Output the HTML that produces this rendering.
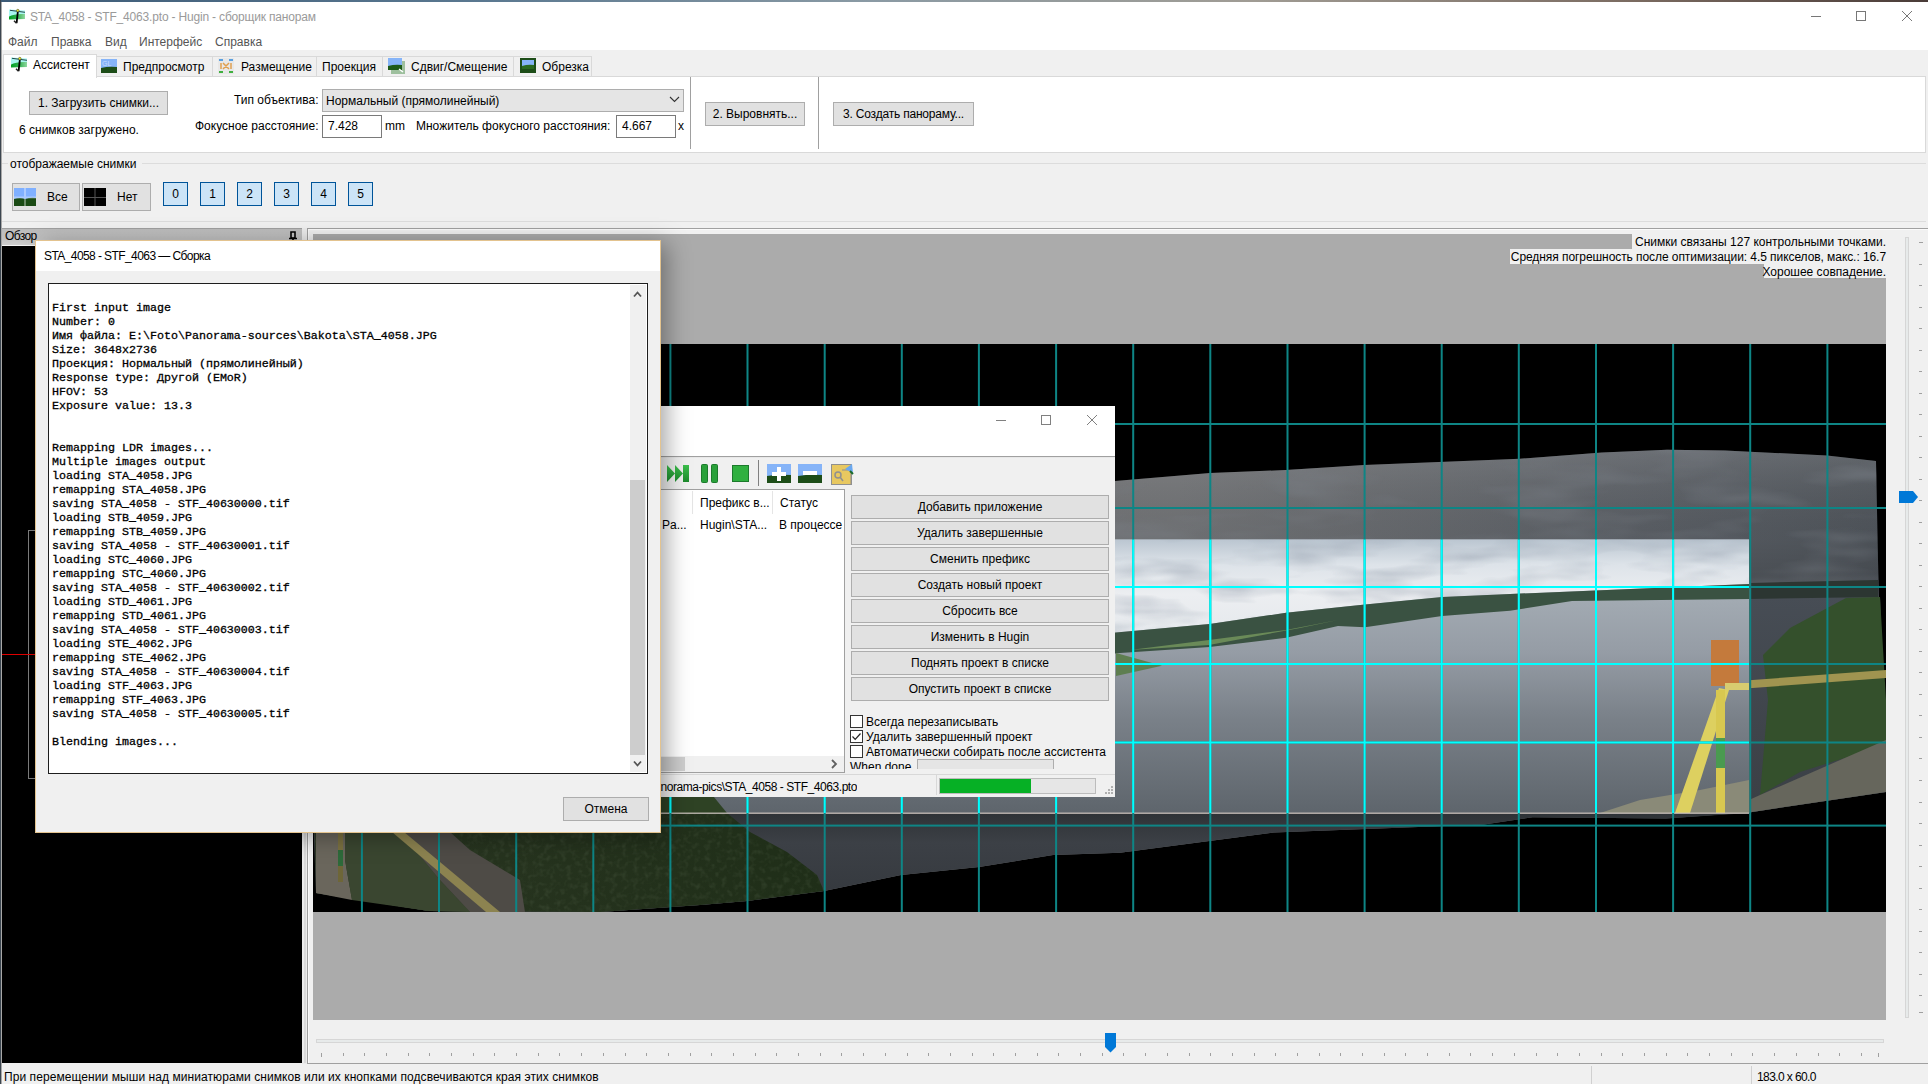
<!DOCTYPE html>
<html><head><meta charset="utf-8">
<style>
*{box-sizing:border-box;margin:0;padding:0}
html,body{width:1928px;height:1084px;overflow:hidden;background:#f0f0f0;font-family:"Liberation Sans",sans-serif;font-size:12px;color:#000}
.a{position:absolute}
.t{position:absolute;white-space:nowrap;font-size:12px;line-height:14px}
.btn{position:absolute;background:#e1e1e1;border:1px solid #adadad}
.btn span{position:absolute;left:0;right:0;text-align:center;white-space:nowrap;line-height:14px}
.inp{position:absolute;background:#fff;border:1px solid #7a7a7a}
.mono{position:absolute;white-space:pre;font-family:"Liberation Mono",monospace;font-size:11.67px;line-height:14px;color:#000;-webkit-text-stroke:0.3px #000}
</style></head>
<body>
<!-- window chrome -->
<div class="a" style="left:0;top:0;width:1928px;height:2px;background:linear-gradient(90deg,#3c5a76 0%,#5a7890 25%,#8a9aa4 45%,#a09c94 65%,#7a6a60 85%,#4a3c38 100%)"></div>
<div class="a" style="left:0;top:2px;width:1928px;height:48px;background:#fff"></div>
<div class="a" style="left:0;top:0;width:1px;height:1084px;background:#3c4650"></div>
<div class="a" style="left:1px;top:2px;width:1px;height:1082px;background:#a8a8a8"></div>

<!-- title -->
<svg class="a" style="left:8px;top:8px" width="18" height="16" viewBox="0 0 18 16">
  <defs><linearGradient id="hg8" x1="0" x2="1" y1="0" y2="0"><stop offset="0" stop-color="#00a020"/><stop offset=".5" stop-color="#30b050"/><stop offset="1" stop-color="#90d8a0"/></linearGradient></defs>
  <path d="M1 1.5 L17 2.5 L17 8 L1 8Z" fill="#a8f6f0"/>
  <path d="M1 8.5 Q6 5.5 17 6 L17 10.9 Q8 11 1 11.6Z" fill="url(#hg8)"/>
  <path d="M2 2.3 L17 4.3" stroke="#24484a" stroke-width="1"/>
  <path d="M9.8 4 L8.6 15.2" stroke="#000" stroke-width="1.8"/>
  <path d="M6 12.8 L8.5 15.2" stroke="#222" stroke-width="1.4"/>
  <circle cx="9.8" cy="2.6" r="1.3" fill="#f2f020" stroke="#333" stroke-width=".5"/>
</svg>
<div class="t" style="left:30px;top:10px;color:#9a9a9a;letter-spacing:-0.18px">STA_4058 - STF_4063.pto - Hugin - сборщик панорам</div>
<!-- caption buttons -->
<div class="a" style="left:1811px;top:16px;width:10px;height:1px;background:#777"></div>
<div class="a" style="left:1856px;top:11px;width:10px;height:10px;border:1px solid #777"></div>
<svg class="a" style="left:1901px;top:10px" width="12" height="12" viewBox="0 0 12 12"><path d="M1 1 L11 11 M11 1 L1 11" stroke="#777" stroke-width="1"/></svg>

<!-- menu -->
<div class="t" style="left:8px;top:35px;color:#555">Файл</div>
<div class="t" style="left:51px;top:35px;color:#555">Правка</div>
<div class="t" style="left:105px;top:35px;color:#555">Вид</div>
<div class="t" style="left:139px;top:35px;color:#555">Интерфейс</div>
<div class="t" style="left:215px;top:35px;color:#555">Справка</div>


<!-- tabs -->
<div class="a" style="left:3px;top:76px;width:1923px;height:77px;background:#fff;border:1px solid #d9d9d9"></div>
<div class="a" style="left:96px;top:56px;width:117px;height:21px;background:#f0f0f0;border:1px solid #d9d9d9"></div>
<div class="a" style="left:212px;top:56px;width:105px;height:21px;background:#f0f0f0;border:1px solid #d9d9d9"></div>
<div class="a" style="left:316px;top:56px;width:67px;height:21px;background:#f0f0f0;border:1px solid #d9d9d9"></div>
<div class="a" style="left:382px;top:56px;width:132px;height:21px;background:#f0f0f0;border:1px solid #d9d9d9"></div>
<div class="a" style="left:513px;top:56px;width:79px;height:21px;background:#f0f0f0;border:1px solid #d9d9d9"></div>
<div class="a" style="left:3px;top:54px;width:94px;height:24px;background:#fff;border:1px solid #d9d9d9;border-bottom:none"></div>
<svg class="a" style="left:10px;top:56px" width="18" height="16" viewBox="0 0 18 16">
  <defs><linearGradient id="hg10" x1="0" x2="1" y1="0" y2="0"><stop offset="0" stop-color="#00a020"/><stop offset=".5" stop-color="#30b050"/><stop offset="1" stop-color="#90d8a0"/></linearGradient></defs>
  <path d="M1 1.5 L17 2.5 L17 8 L1 8Z" fill="#a8f6f0"/>
  <path d="M1 8.5 Q6 5.5 17 6 L17 10.9 Q8 11 1 11.6Z" fill="url(#hg10)"/>
  <path d="M2 2.3 L17 4.3" stroke="#24484a" stroke-width="1"/>
  <path d="M9.8 4 L8.6 15.2" stroke="#000" stroke-width="1.8"/>
  <path d="M6 12.8 L8.5 15.2" stroke="#222" stroke-width="1.4"/>
  <circle cx="9.8" cy="2.6" r="1.3" fill="#f2f020" stroke="#333" stroke-width=".5"/>
</svg>
<div class="t" style="left:33px;top:58px">Ассистент</div>
<svg class="a" style="left:101px;top:59px" width="16" height="14" viewBox="0 0 16 14">
  <rect width="16" height="14" fill="#86b4f8"/><path d="M0 9 Q8 7 16 8 L16 14 L0 14Z" fill="#1d4d18"/>
  <text x="1" y="7" font-size="7" fill="#c8dcff" font-family="Liberation Sans">GL</text>
</svg>
<div class="t" style="left:123px;top:60px">Предпросмотр</div>
<svg class="a" style="left:218px;top:58px" width="16" height="16" viewBox="0 0 16 16">
  <rect x="0" y="0" width="16" height="16" fill="#e8e8e8"/>
  <path d="M1 2h4M11 2h4" stroke="#5aa0e0" stroke-width="2"/><path d="M1 14h4M11 14h4" stroke="#40b040" stroke-width="2"/>
  <path d="M3 5v6M13 5v6M5 5l6 6M11 5l-6 6" stroke="#e0a050" stroke-width="1.5"/>
</svg>
<div class="t" style="left:241px;top:60px">Размещение</div>
<div class="t" style="left:322px;top:60px">Проекция</div>
<svg class="a" style="left:388px;top:58px" width="17" height="16" viewBox="0 0 17 16">
  <rect x="3" y="3" width="14" height="13" fill="#9ec09e"/><rect x="0" y="0" width="14" height="12" fill="#86b4f8"/>
  <path d="M0 8 Q7 6 14 7 L14 12 L0 12Z" fill="#1d5a18"/><path d="M11 11 l4 3" stroke="#fff" stroke-width="1.5"/>
</svg>
<div class="t" style="left:411px;top:60px">Сдвиг/Смещение</div>
<svg class="a" style="left:520px;top:58px" width="16" height="15" viewBox="0 0 16 15">
  <rect width="16" height="15" fill="#1d4d18"/><rect x="2" y="2" width="12" height="8" fill="#86b4f8"/><path d="M2 8 Q8 6 14 7 L14 11 L2 11Z" fill="#2a6a20"/>
</svg>
<div class="t" style="left:542px;top:60px">Обрезка</div>

<!-- assistant panel -->
<div class="btn" style="left:29px;top:91px;width:139px;height:24px"><span style="top:4px">1. Загрузить снимки...</span></div>
<div class="t" style="left:19px;top:123px">6 снимков загружено.</div>
<div class="t" style="left:234px;top:93px">Тип объектива:</div>
<div class="a" style="left:322px;top:89px;width:362px;height:23px;background:#e5e5e5;border:1px solid #adadad"></div>
<div class="t" style="left:326px;top:94px">Нормальный (прямолинейный)</div>
<svg class="a" style="left:669px;top:96px" width="11" height="7" viewBox="0 0 11 7"><path d="M1 1 L5.5 5.5 L10 1" fill="none" stroke="#333" stroke-width="1.1"/></svg>
<div class="t" style="left:195px;top:119px">Фокусное расстояние:</div>
<div class="inp" style="left:322px;top:115px;width:60px;height:23px"></div>
<div class="t" style="left:328px;top:119px">7.428</div>
<div class="t" style="left:385px;top:119px">mm</div>
<div class="t" style="left:416px;top:119px">Множитель фокусного расстояния:</div>
<div class="inp" style="left:616px;top:115px;width:60px;height:23px"></div>
<div class="t" style="left:622px;top:119px">4.667</div>
<div class="t" style="left:678px;top:119px">x</div>
<div class="a" style="left:690px;top:77px;width:1px;height:72px;background:#a0a0a0"></div>
<div class="btn" style="left:705px;top:102px;width:100px;height:24px"><span style="top:4px">2. Выровнять...</span></div>
<div class="a" style="left:818px;top:77px;width:1px;height:72px;background:#a0a0a0"></div>
<div class="btn" style="left:833px;top:102px;width:141px;height:24px"><span style="top:4px;letter-spacing:-0.2px">3. Создать панораму...</span></div>

<!-- group -->
<div class="a" style="left:2px;top:163px;width:1924px;height:1px;background:#dcdcdc"></div>
<div class="a" style="left:8px;top:156px;width:134px;height:14px;background:#f0f0f0"></div>
<div class="t" style="left:10px;top:157px">отображаемые снимки</div>
<div class="btn" style="left:12px;top:183px;width:68px;height:28px"></div>
<svg class="a" style="left:14px;top:188px" width="22" height="18" viewBox="0 0 22 18">
  <rect width="22" height="18" fill="#80b0ff"/><path d="M0 11 Q6 9 11 11 Q17 9 22 10 L22 18 L0 18Z" fill="#1a4a14"/>
  <path d="M11 0v18M0 9.5h22" stroke="#fff" stroke-opacity=".35" stroke-width="2"/>
</svg>
<div class="t" style="left:47px;top:190px">Все</div>
<div class="btn" style="left:82px;top:183px;width:69px;height:28px"></div>
<svg class="a" style="left:84px;top:188px" width="22" height="18" viewBox="0 0 22 18">
  <rect width="22" height="18" fill="#000"/><path d="M11 0v18M0 9.5h22" stroke="#555" stroke-width="1"/>
</svg>
<div class="t" style="left:117px;top:190px">Нет</div>
<div class="a" style="left:163px;top:182px;width:25px;height:24px;background:#cce4f7;border:1px solid #005499"></div><div class="t" style="left:163px;width:25px;text-align:center;top:187px">0</div>
<div class="a" style="left:200px;top:182px;width:25px;height:24px;background:#cce4f7;border:1px solid #005499"></div><div class="t" style="left:200px;width:25px;text-align:center;top:187px">1</div>
<div class="a" style="left:237px;top:182px;width:25px;height:24px;background:#cce4f7;border:1px solid #005499"></div><div class="t" style="left:237px;width:25px;text-align:center;top:187px">2</div>
<div class="a" style="left:274px;top:182px;width:25px;height:24px;background:#cce4f7;border:1px solid #005499"></div><div class="t" style="left:274px;width:25px;text-align:center;top:187px">3</div>
<div class="a" style="left:311px;top:182px;width:25px;height:24px;background:#cce4f7;border:1px solid #005499"></div><div class="t" style="left:311px;width:25px;text-align:center;top:187px">4</div>
<div class="a" style="left:348px;top:182px;width:25px;height:24px;background:#cce4f7;border:1px solid #005499"></div><div class="t" style="left:348px;width:25px;text-align:center;top:187px">5</div>
<div class="a" style="left:2px;top:221px;width:1924px;height:1px;background:#dcdcdc"></div>

<!-- dock Обзор -->
<div class="a" style="left:2px;top:228px;width:301px;height:18px;background:linear-gradient(#bdbdbd,#c2c2c2 60%,#cfcfcf);border-top:1px solid #a0a0a0;border-bottom:1px solid #f4f4f4"></div>
<div class="t" style="left:5px;top:229px;letter-spacing:-0.6px">Обзор</div>
<svg class="a" style="left:288px;top:231px" width="10" height="11" viewBox="0 0 10 11"><path d="M3 1h4v6h-4z" fill="none" stroke="#000" stroke-width="1.6"/><path d="M1 7.5h8M5 8v3" stroke="#000" stroke-width="1.6"/></svg>
<div class="a" style="left:2px;top:246px;width:300px;height:817px;background:#000"></div>
<div class="a" style="left:28px;top:530px;width:40px;height:249px;border:1px solid #808080;border-right:none"></div>
<div class="a" style="left:2px;top:654px;width:40px;height:1px;background:#e00000"></div>
<!-- splitter -->
<div class="a" style="left:302px;top:228px;width:5px;height:836px;background:#ececec"></div>
<div class="a" style="left:304px;top:246px;width:2px;height:817px;background:#dadada"></div>

<!-- preview panel -->
<div class="a" style="left:307px;top:228px;width:1621px;height:836px;border-left:1px solid #a0a0a0;border-top:1px solid #a0a0a0;border-bottom:1px solid #a0a0a0;background:#f0f0f0"></div>
<div class="a" style="left:308px;top:229px;width:1620px;height:1px;background:#fafafa"></div>
<div class="a" style="left:308px;top:229px;width:1px;height:834px;background:#fafafa"></div>
<svg class="a" style="left:313px;top:234px" width="1573" height="786" viewBox="313 234 1573 786">
  <defs>
    <linearGradient id="skyd" x1="0" y1="0" x2="1" y2="0"><stop offset="0" stop-color="#808183"/><stop offset=".55" stop-color="#7c7e81"/><stop offset=".85" stop-color="#62676e"/><stop offset="1" stop-color="#565c63"/></linearGradient>
    <linearGradient id="skyb" gradientUnits="userSpaceOnUse" x1="0" x2="0" y1="539" y2="640"><stop offset="0" stop-color="#bac5d0"/><stop offset=".25" stop-color="#dde3e9"/><stop offset=".55" stop-color="#eceef1"/><stop offset="1" stop-color="#e4e8ec"/></linearGradient>
    <linearGradient id="watb" gradientUnits="userSpaceOnUse" x1="0" x2="0" y1="600" y2="813"><stop offset="0" stop-color="#a2aab2"/><stop offset=".25" stop-color="#959ca5"/><stop offset=".55" stop-color="#7a8189"/><stop offset="1" stop-color="#5e656c"/></linearGradient>
    <linearGradient id="watd" x1="0" y1="0" x2="0" y2="1"><stop offset="0" stop-color="#474d55"/><stop offset="1" stop-color="#3a3f45"/></linearGradient>
    <linearGradient id="skyv" gradientUnits="userSpaceOnUse" x1="0" x2="0" y1="450" y2="600"><stop offset="0" stop-color="#888" stop-opacity=".25"/><stop offset=".6" stop-color="#000" stop-opacity=".12"/><stop offset="1" stop-color="#000" stop-opacity=".25"/></linearGradient>
    <linearGradient id="band" x1="0" y1="0" x2="0" y2="1"><stop offset="0" stop-color="#2e3236"/><stop offset=".3" stop-color="#3c4046"/><stop offset="1" stop-color="#33373c"/></linearGradient>
    <linearGradient id="hill" x1="0" y1="0" x2="1" y2="0"><stop offset="0" stop-color="#2a3622"/><stop offset="1" stop-color="#1f2e18"/></linearGradient>
    <filter id="cloud" x="0" y="0" width="100%" height="100%"><feTurbulence type="fractalNoise" baseFrequency="0.012 0.05" numOctaves="3" seed="7"/><feColorMatrix values="0 0 0 0 0.35  0 0 0 0 0.4  0 0 0 0 0.47  0 0 0 -2.2 1.25"/></filter>
    <filter id="cloud2" x="0" y="0" width="100%" height="100%"><feTurbulence type="fractalNoise" baseFrequency="0.008 0.035" numOctaves="3" seed="3"/><feColorMatrix values="0 0 0 0 0.2  0 0 0 0 0.22  0 0 0 0 0.25  0 0 0 -2.5 1.3"/></filter>
    <filter id="foli" x="0" y="0" width="100%" height="100%"><feTurbulence type="fractalNoise" baseFrequency="0.18" numOctaves="2" seed="11"/><feColorMatrix values="0 0 0 0 0.3  0 0 0 0 0.38  0 0 0 0 0.25  0 0 0 -2 1.1"/></filter>
    <filter id="ripple" x="0" y="0" width="100%" height="100%"><feTurbulence type="fractalNoise" baseFrequency="0.006 0.09" numOctaves="2" seed="5"/><feColorMatrix values="0 0 0 0 0.85  0 0 0 0 0.88  0 0 0 0 0.92  0 0 0 -2.5 1.2"/></filter>
    <clipPath id="hillclip"><path d="M313 760 L700 760 L727 813 L750 832 L787 852 L817 875 L824 891 L747 901 L700 905 L600 912 L429 911 L316 893 Z"/></clipPath>
    <clipPath id="cliffclip"><path d="M1846 598 L1880 597 L1886 700 L1886 745 L1800 772 L1760 795 L1763 760 L1768 700 L1763 655 L1790 628 Z"/></clipPath>
    <clipPath id="skyclip"><path d="M660 539.5 L1749 539.5 L1749 584 L1510 594 L1442 597 L1365 604.5 L1286 612.8 L1209.6 624 L1116 632.5 L660 680 Z"/></clipPath>
    <clipPath id="dimclip"><path d="M316 500 L700 492 L1115 481 L1210 473 L1286 470 L1364 465 L1520 458.7 L1602 452.5 L1667 449.7 L1725 450.5 L1827 455.4 L1876 461 L1878 560 L1880 640 L1886 760 L1886.6 792 L1749 812.4 L1666 818.4 L1532.6 817.2 L1484 824.5 L1273.7 832.6 L1120 852.8 L1053 855 L979 867 L901 875 L824 891 L747 901 L700 905 L600 912 L429 911 L316 893 Z"/></clipPath>
  </defs>
  <rect x="313" y="234" width="1573" height="786" fill="#ababab"/>
  <rect x="313" y="344" width="1573" height="568" fill="#000"/>
  <path d="M316 500 L700 492 L1115 481 L1210 473 L1286 470 L1364 465 L1520 458.7 L1602 452.5 L1667 449.7 L1725 450.5 L1827 455.4 L1876 461 L1878 560 L1880 640 L1886 760 L1886.6 792 L1749 812.4 L1666 818.4 L1532.6 817.2 L1484 824.5 L1273.7 832.6 L1120 852.8 L1053 855 L979 867 L901 875 L824 891 L747 901 L700 905 L600 912 L429 911 L316 893 Z" fill="url(#skyd)"/>
  <path d="M316 500 L700 492 L1115 481 L1210 473 L1286 470 L1364 465 L1520 458.7 L1602 452.5 L1667 449.7 L1725 450.5 L1827 455.4 L1876 461 L1878 560 L1880 640 L1886 760 L1886.6 792 L1749 812.4 L1666 818.4 L1532.6 817.2 L1484 824.5 L1273.7 832.6 L1120 852.8 L1053 855 L979 867 L901 875 L824 891 L747 901 L700 905 L600 912 L429 911 L316 893 Z" fill="url(#skyv)"/>
  <g clip-path="url(#dimclip)"><rect x="313" y="440" width="1573" height="160" filter="url(#cloud2)" opacity=".5"/></g>
  <path d="M313 813 L1749 813 L1666 818.4 L1532.6 817.2 L1484 824.5 L1273.7 832.6 L1120 852.8 L1053 855 L979 867 L901 875 L824 891 L747 901 L700 905 L600 912 L429 911 L316 893 Z" fill="url(#band)"/>
  <!-- right dim part -->
  <path d="M1749 583 L1878 580 L1878 598 L1749 600 Z" fill="#2c3632"/>
  <path d="M1749 599 L1880 597 L1886 760 L1886.6 792 L1749 812.4 Z" fill="url(#watd)"/>
  <path d="M1846 598 L1880 597 L1886 700 L1886 745 L1800 772 L1760 795 L1763 760 L1768 700 L1763 655 L1790 628 Z" fill="#34502c"/>
  <path d="M1760 795 L1886 740 L1886.6 792 L1749 812.4 L1749 800 Z" fill="#66665c"/>
  <path d="M1725 682 L1886 670 L1886 678 L1725 690 Z" fill="#a09450"/>
  <!-- lower-left hill (dim) -->
  <path d="M313 760 L700 760 L727 813 L750 832 L787 852 L817 875 L824 891 L747 901 L700 905 L600 912 L429 911 L316 893 Z" fill="url(#hill)"/>
  <g clip-path="url(#hillclip)"><rect x="313" y="760" width="520" height="155" filter="url(#foli)" opacity=".15"/></g>
  <path d="M316 832 L350 832 L345 860 L352 900 L316 893 Z" fill="#6a665c"/>
  <path d="M345 832 L400 832 L440 880 L470 912 L429 911 L352 900 L345 860 Z" fill="#3a4630"/>
  <path d="M400 832 L450 832 L470 850 L520 880 L525 912 L470 912 L440 880 Z" fill="#4e4b46"/>
  <path d="M392 832 L404 832 L500 912 L486 912 Z" fill="#8c8350"/>
  <rect x="338" y="832" width="5" height="18" fill="#7a7040"/><rect x="338" y="850" width="5" height="16" fill="#2e6a3a"/><rect x="338" y="866" width="5" height="16" fill="#6e6638"/>
  <!-- highlighted image -->
  <rect x="660" y="539.5" width="1089" height="273.5" fill="url(#watb)"/>
  <path d="M660 539.5 L1749 539.5 L1749 584 L1510 594 L1442 597 L1365 604.5 L1286 612.8 L1209.6 624 L1116 632.5 L660 680 Z" fill="url(#skyb)"/>
  <g clip-path="url(#skyclip)"><rect x="660" y="539" width="1090" height="145" filter="url(#cloud)" opacity=".55"/></g>
  <path d="M660 680 L1116 632.5 L1209.6 624 L1286 612.8 L1365 604.5 L1442 597 L1510 594 L1749 584 L1749 599 L1572 601 L1510 610.7 L1442 616 L1365 627.3 L1338 626 L1286 637.7 L1209.6 647 L1120 653 L660 700 Z" fill="#3a5242"/>
  <path d="M1130 650 L1209 640 L1286 630 L1338 620 L1300 628 L1209 645 Z" fill="#6a8a58"/>
  <path d="M1116 653 L1162 665.7 L1116 676 Z" fill="#5e7e50"/>
  <path d="M660 760 L700 780 L727 813 L660 813 Z" fill="#2e4224"/>
  <path d="M1600 813 L1640 800 L1700 790 L1749 780 L1749 813 Z" fill="#8a8a78"/>
  <rect x="1711" y="640" width="28" height="46" fill="#c47a3c"/>
  <path d="M1719 688 L1729 690 L1690 813 L1675 813 Z" fill="#ddd060"/>
  <rect x="1716" y="690" width="9" height="123" fill="#d8c850"/>
  <rect x="1716" y="738" width="9" height="30" fill="#4a9a50"/>
  <rect x="1725" y="683" width="24" height="7" fill="#d8cc70"/>
  <rect x="1749" y="539.5" width="1" height="273.5" fill="#c03020"/>
  <rect x="660" y="812.6" width="1089" height="1.2" fill="#cfc6c0"/>
  <g><rect x="360.9" y="344" width="2" height="568" fill="#0e8585"/><rect x="438.0" y="344" width="2" height="568" fill="#0e8585"/><rect x="515.2" y="344" width="2" height="568" fill="#0e8585"/><rect x="592.3" y="344" width="2" height="568" fill="#0e8585"/><rect x="669.4" y="344" width="2" height="568" fill="#0e8585"/><rect x="746.5" y="344" width="2" height="568" fill="#0e8585"/><rect x="823.7" y="344" width="2" height="568" fill="#0e8585"/><rect x="900.8" y="344" width="2" height="568" fill="#0e8585"/><rect x="977.9" y="344" width="2" height="568" fill="#0e8585"/><rect x="1055.1" y="344" width="2" height="568" fill="#0e8585"/><rect x="1132.2" y="344" width="2" height="568" fill="#0e8585"/><rect x="1209.3" y="344" width="2" height="568" fill="#0e8585"/><rect x="1286.5" y="344" width="2" height="568" fill="#0e8585"/><rect x="1363.6" y="344" width="2" height="568" fill="#0e8585"/><rect x="1440.7" y="344" width="2" height="568" fill="#0e8585"/><rect x="1517.8" y="344" width="2" height="568" fill="#0e8585"/><rect x="1595.0" y="344" width="2" height="568" fill="#0e8585"/><rect x="1672.1" y="344" width="2" height="568" fill="#0e8585"/><rect x="1749.2" y="344" width="2" height="568" fill="#0e8585"/><rect x="1826.4" y="344" width="2" height="568" fill="#0e8585"/><rect x="313" y="423.0" width="1573" height="2" fill="#0e8585"/><rect x="313" y="507.0" width="1573" height="2" fill="#0e8585"/><rect x="313" y="586.0" width="1573" height="2" fill="#0e8585"/><rect x="313" y="663.0" width="1573" height="2" fill="#0e8585"/><rect x="313" y="741.5" width="1573" height="2" fill="#0e8585"/><rect x="313" y="824.6" width="1573" height="2" fill="#0e8585"/><rect x="669.4" y="539.5" width="2" height="273.5" fill="#00ffff"/><rect x="746.5" y="539.5" width="2" height="273.5" fill="#00ffff"/><rect x="823.7" y="539.5" width="2" height="273.5" fill="#00ffff"/><rect x="900.8" y="539.5" width="2" height="273.5" fill="#00ffff"/><rect x="977.9" y="539.5" width="2" height="273.5" fill="#00ffff"/><rect x="1055.1" y="539.5" width="2" height="273.5" fill="#00ffff"/><rect x="1132.2" y="539.5" width="2" height="273.5" fill="#00ffff"/><rect x="1209.3" y="539.5" width="2" height="273.5" fill="#00ffff"/><rect x="1286.5" y="539.5" width="2" height="273.5" fill="#00ffff"/><rect x="1363.6" y="539.5" width="2" height="273.5" fill="#00ffff"/><rect x="1440.7" y="539.5" width="2" height="273.5" fill="#00ffff"/><rect x="1517.8" y="539.5" width="2" height="273.5" fill="#00ffff"/><rect x="1595.0" y="539.5" width="2" height="273.5" fill="#00ffff"/><rect x="1672.1" y="539.5" width="2" height="273.5" fill="#00ffff"/><rect x="660" y="586.0" width="1089" height="2" fill="#00ffff"/><rect x="660" y="663.0" width="1089" height="2" fill="#00ffff"/><rect x="660" y="741.5" width="1089" height="2" fill="#00ffff"/></g>
</svg>
<div class="a" style="left:1632px;top:234px;width:254px;height:15px;background:#f0f0f0"></div>
<div class="a" style="left:1510px;top:249px;width:376px;height:15px;background:#f0f0f0"></div>
<div class="a" style="left:1764px;top:264px;width:122px;height:14px;background:#f0f0f0"></div>
<div class="t" style="left:1632px;top:235px;width:254px;text-align:right">Снимки связаны 127 контрольными точками.</div>
<div class="t" style="left:1500px;top:250px;width:386px;text-align:right;letter-spacing:-0.07px">Средняя погрешность после оптимизации: 4.5 пикселов, макс.: 16.7</div>
<div class="t" style="left:1700px;top:265px;width:186px;text-align:right">Хорошее совпадение.</div>

<!-- right slider -->
<div class="a" style="left:1905px;top:237px;width:4px;height:781px;background:#e7eaea;border:1px solid #d6d6d6"></div>
<svg class="a" style="left:1899px;top:491px" width="20" height="12" viewBox="0 0 20 12"><path d="M0 0h14l5 6l-5 6h-14z" fill="#0078d7"/></svg>

<div class="a" style="left:1919px;top:242px;width:4px;height:1px;background:#a0a0a0"></div><div class="a" style="left:1919px;top:264px;width:3px;height:1px;background:#a0a0a0"></div><div class="a" style="left:1919px;top:285px;width:3px;height:1px;background:#a0a0a0"></div><div class="a" style="left:1919px;top:307px;width:3px;height:1px;background:#a0a0a0"></div><div class="a" style="left:1919px;top:328px;width:3px;height:1px;background:#a0a0a0"></div><div class="a" style="left:1919px;top:350px;width:3px;height:1px;background:#a0a0a0"></div><div class="a" style="left:1919px;top:371px;width:3px;height:1px;background:#a0a0a0"></div><div class="a" style="left:1919px;top:393px;width:3px;height:1px;background:#a0a0a0"></div><div class="a" style="left:1919px;top:414px;width:3px;height:1px;background:#a0a0a0"></div><div class="a" style="left:1919px;top:436px;width:3px;height:1px;background:#a0a0a0"></div><div class="a" style="left:1919px;top:457px;width:3px;height:1px;background:#a0a0a0"></div><div class="a" style="left:1919px;top:479px;width:3px;height:1px;background:#a0a0a0"></div><div class="a" style="left:1919px;top:500px;width:3px;height:1px;background:#a0a0a0"></div><div class="a" style="left:1919px;top:522px;width:3px;height:1px;background:#a0a0a0"></div><div class="a" style="left:1919px;top:543px;width:3px;height:1px;background:#a0a0a0"></div><div class="a" style="left:1919px;top:565px;width:3px;height:1px;background:#a0a0a0"></div><div class="a" style="left:1919px;top:586px;width:3px;height:1px;background:#a0a0a0"></div><div class="a" style="left:1919px;top:608px;width:3px;height:1px;background:#a0a0a0"></div><div class="a" style="left:1919px;top:629px;width:3px;height:1px;background:#a0a0a0"></div><div class="a" style="left:1919px;top:651px;width:3px;height:1px;background:#a0a0a0"></div><div class="a" style="left:1919px;top:672px;width:3px;height:1px;background:#a0a0a0"></div><div class="a" style="left:1919px;top:694px;width:3px;height:1px;background:#a0a0a0"></div><div class="a" style="left:1919px;top:715px;width:3px;height:1px;background:#a0a0a0"></div><div class="a" style="left:1919px;top:737px;width:3px;height:1px;background:#a0a0a0"></div><div class="a" style="left:1919px;top:758px;width:3px;height:1px;background:#a0a0a0"></div><div class="a" style="left:1919px;top:780px;width:3px;height:1px;background:#a0a0a0"></div><div class="a" style="left:1919px;top:802px;width:3px;height:1px;background:#a0a0a0"></div><div class="a" style="left:1919px;top:823px;width:3px;height:1px;background:#a0a0a0"></div><div class="a" style="left:1919px;top:845px;width:3px;height:1px;background:#a0a0a0"></div><div class="a" style="left:1919px;top:866px;width:3px;height:1px;background:#a0a0a0"></div><div class="a" style="left:1919px;top:888px;width:3px;height:1px;background:#a0a0a0"></div><div class="a" style="left:1919px;top:909px;width:3px;height:1px;background:#a0a0a0"></div><div class="a" style="left:1919px;top:931px;width:3px;height:1px;background:#a0a0a0"></div><div class="a" style="left:1919px;top:952px;width:3px;height:1px;background:#a0a0a0"></div><div class="a" style="left:1919px;top:974px;width:3px;height:1px;background:#a0a0a0"></div><div class="a" style="left:1919px;top:995px;width:3px;height:1px;background:#a0a0a0"></div><div class="a" style="left:1919px;top:1012px;width:4px;height:1px;background:#a0a0a0"></div>
<!-- bottom slider -->
<div class="a" style="left:316px;top:1039px;width:1568px;height:4px;background:#e7eaea;border:1px solid #d6d6d6"></div>
<svg class="a" style="left:1105px;top:1033px" width="11" height="20" viewBox="0 0 11 20"><path d="M0 0h11v14l-5.5 5.5l-5.5-5.5z" fill="#0078d7"/></svg>


<div class="a" style="left:321px;top:1053px;width:1px;height:4px;background:#a0a0a0"></div><div class="a" style="left:343px;top:1053px;width:1px;height:3px;background:#a0a0a0"></div><div class="a" style="left:364px;top:1053px;width:1px;height:3px;background:#a0a0a0"></div><div class="a" style="left:386px;top:1053px;width:1px;height:3px;background:#a0a0a0"></div><div class="a" style="left:408px;top:1053px;width:1px;height:3px;background:#a0a0a0"></div><div class="a" style="left:429px;top:1053px;width:1px;height:3px;background:#a0a0a0"></div><div class="a" style="left:451px;top:1053px;width:1px;height:3px;background:#a0a0a0"></div><div class="a" style="left:473px;top:1053px;width:1px;height:3px;background:#a0a0a0"></div><div class="a" style="left:494px;top:1053px;width:1px;height:3px;background:#a0a0a0"></div><div class="a" style="left:516px;top:1053px;width:1px;height:3px;background:#a0a0a0"></div><div class="a" style="left:538px;top:1053px;width:1px;height:3px;background:#a0a0a0"></div><div class="a" style="left:559px;top:1053px;width:1px;height:3px;background:#a0a0a0"></div><div class="a" style="left:581px;top:1053px;width:1px;height:3px;background:#a0a0a0"></div><div class="a" style="left:603px;top:1053px;width:1px;height:3px;background:#a0a0a0"></div><div class="a" style="left:625px;top:1053px;width:1px;height:3px;background:#a0a0a0"></div><div class="a" style="left:646px;top:1053px;width:1px;height:3px;background:#a0a0a0"></div><div class="a" style="left:668px;top:1053px;width:1px;height:3px;background:#a0a0a0"></div><div class="a" style="left:690px;top:1053px;width:1px;height:3px;background:#a0a0a0"></div><div class="a" style="left:711px;top:1053px;width:1px;height:3px;background:#a0a0a0"></div><div class="a" style="left:733px;top:1053px;width:1px;height:3px;background:#a0a0a0"></div><div class="a" style="left:755px;top:1053px;width:1px;height:3px;background:#a0a0a0"></div><div class="a" style="left:776px;top:1053px;width:1px;height:3px;background:#a0a0a0"></div><div class="a" style="left:798px;top:1053px;width:1px;height:3px;background:#a0a0a0"></div><div class="a" style="left:820px;top:1053px;width:1px;height:3px;background:#a0a0a0"></div><div class="a" style="left:841px;top:1053px;width:1px;height:3px;background:#a0a0a0"></div><div class="a" style="left:863px;top:1053px;width:1px;height:3px;background:#a0a0a0"></div><div class="a" style="left:885px;top:1053px;width:1px;height:3px;background:#a0a0a0"></div><div class="a" style="left:907px;top:1053px;width:1px;height:3px;background:#a0a0a0"></div><div class="a" style="left:928px;top:1053px;width:1px;height:3px;background:#a0a0a0"></div><div class="a" style="left:950px;top:1053px;width:1px;height:3px;background:#a0a0a0"></div><div class="a" style="left:972px;top:1053px;width:1px;height:3px;background:#a0a0a0"></div><div class="a" style="left:993px;top:1053px;width:1px;height:3px;background:#a0a0a0"></div><div class="a" style="left:1015px;top:1053px;width:1px;height:3px;background:#a0a0a0"></div><div class="a" style="left:1037px;top:1053px;width:1px;height:3px;background:#a0a0a0"></div><div class="a" style="left:1058px;top:1053px;width:1px;height:3px;background:#a0a0a0"></div><div class="a" style="left:1080px;top:1053px;width:1px;height:3px;background:#a0a0a0"></div><div class="a" style="left:1102px;top:1053px;width:1px;height:3px;background:#a0a0a0"></div><div class="a" style="left:1123px;top:1053px;width:1px;height:3px;background:#a0a0a0"></div><div class="a" style="left:1145px;top:1053px;width:1px;height:3px;background:#a0a0a0"></div><div class="a" style="left:1167px;top:1053px;width:1px;height:3px;background:#a0a0a0"></div><div class="a" style="left:1189px;top:1053px;width:1px;height:3px;background:#a0a0a0"></div><div class="a" style="left:1210px;top:1053px;width:1px;height:3px;background:#a0a0a0"></div><div class="a" style="left:1232px;top:1053px;width:1px;height:3px;background:#a0a0a0"></div><div class="a" style="left:1254px;top:1053px;width:1px;height:3px;background:#a0a0a0"></div><div class="a" style="left:1275px;top:1053px;width:1px;height:3px;background:#a0a0a0"></div><div class="a" style="left:1297px;top:1053px;width:1px;height:3px;background:#a0a0a0"></div><div class="a" style="left:1319px;top:1053px;width:1px;height:3px;background:#a0a0a0"></div><div class="a" style="left:1340px;top:1053px;width:1px;height:3px;background:#a0a0a0"></div><div class="a" style="left:1362px;top:1053px;width:1px;height:3px;background:#a0a0a0"></div><div class="a" style="left:1384px;top:1053px;width:1px;height:3px;background:#a0a0a0"></div><div class="a" style="left:1405px;top:1053px;width:1px;height:3px;background:#a0a0a0"></div><div class="a" style="left:1427px;top:1053px;width:1px;height:3px;background:#a0a0a0"></div><div class="a" style="left:1449px;top:1053px;width:1px;height:3px;background:#a0a0a0"></div><div class="a" style="left:1470px;top:1053px;width:1px;height:3px;background:#a0a0a0"></div><div class="a" style="left:1492px;top:1053px;width:1px;height:3px;background:#a0a0a0"></div><div class="a" style="left:1514px;top:1053px;width:1px;height:3px;background:#a0a0a0"></div><div class="a" style="left:1536px;top:1053px;width:1px;height:3px;background:#a0a0a0"></div><div class="a" style="left:1557px;top:1053px;width:1px;height:3px;background:#a0a0a0"></div><div class="a" style="left:1579px;top:1053px;width:1px;height:3px;background:#a0a0a0"></div><div class="a" style="left:1601px;top:1053px;width:1px;height:3px;background:#a0a0a0"></div><div class="a" style="left:1622px;top:1053px;width:1px;height:3px;background:#a0a0a0"></div><div class="a" style="left:1644px;top:1053px;width:1px;height:3px;background:#a0a0a0"></div><div class="a" style="left:1666px;top:1053px;width:1px;height:3px;background:#a0a0a0"></div><div class="a" style="left:1687px;top:1053px;width:1px;height:3px;background:#a0a0a0"></div><div class="a" style="left:1709px;top:1053px;width:1px;height:3px;background:#a0a0a0"></div><div class="a" style="left:1731px;top:1053px;width:1px;height:3px;background:#a0a0a0"></div><div class="a" style="left:1752px;top:1053px;width:1px;height:3px;background:#a0a0a0"></div><div class="a" style="left:1774px;top:1053px;width:1px;height:3px;background:#a0a0a0"></div><div class="a" style="left:1796px;top:1053px;width:1px;height:3px;background:#a0a0a0"></div><div class="a" style="left:1818px;top:1053px;width:1px;height:3px;background:#a0a0a0"></div><div class="a" style="left:1839px;top:1053px;width:1px;height:3px;background:#a0a0a0"></div><div class="a" style="left:1861px;top:1053px;width:1px;height:3px;background:#a0a0a0"></div><div class="a" style="left:1878px;top:1053px;width:1px;height:4px;background:#a0a0a0"></div>
<!-- status bar -->
<div class="t" style="left:4px;top:1070px;letter-spacing:0.07px">При перемещении мыши над миниатюрами снимков или их кнопками подсвечиваются края этих снимков</div>
<div class="a" style="left:1591px;top:1066px;width:1px;height:18px;background:#d0d0d0"></div>
<div class="a" style="left:1751px;top:1066px;width:1px;height:18px;background:#d0d0d0"></div>
<div class="t" style="left:1757px;top:1070px;letter-spacing:-0.6px">183.0 x 60.0</div>

<!-- ============ dialog 2: batch processor ============ -->
<div class="a" style="left:400px;top:406px;width:715px;height:391px;background:#f0f0f0;overflow:hidden">
  <div class="a" style="left:0;top:0;width:715px;height:50px;background:#fff"></div>
  <div class="a" style="left:596px;top:14px;width:10px;height:1px;background:#808080"></div>
  <div class="a" style="left:641px;top:9px;width:10px;height:10px;border:1px solid #808080"></div>
  <svg class="a" style="left:686px;top:8px" width="12" height="12" viewBox="0 0 12 12"><path d="M1 1 L11 11 M11 1 L1 11" stroke="#808080" stroke-width="1"/></svg>
  <div class="a" style="left:0;top:50px;width:715px;height:1px;background:#a0a0a0"></div>
  <div class="a" style="left:0;top:51px;width:715px;height:1px;background:#e8e8e8"></div>
</div>
<!-- toolbar icons -->
<svg class="a" style="left:666px;top:464px" width="24" height="19" viewBox="0 0 24 19">
  <defs><linearGradient id="gg" x1="0" y1="0" x2="0" y2="1"><stop offset="0" stop-color="#3cc04c"/><stop offset="1" stop-color="#1c8a2c"/></linearGradient></defs>
  <path d="M1 1 L9 9.5 L1 18Z M9 1 L17 9.5 L9 18Z" fill="url(#gg)"/><rect x="17" y="1" width="6" height="17" fill="url(#gg)"/>
</svg>
<svg class="a" style="left:701px;top:464px" width="17" height="19" viewBox="0 0 17 19"><rect x="0.5" y="0.5" width="6" height="18" rx="1" fill="#2aa03a" stroke="#1c7a2c"/><rect x="10.5" y="0.5" width="6" height="18" rx="1" fill="#2aa03a" stroke="#1c7a2c"/></svg>
<svg class="a" style="left:732px;top:465px" width="17" height="17" viewBox="0 0 17 17"><rect x="0.5" y="0.5" width="16" height="16" fill="#30b040" stroke="#1c7a2c"/></svg>
<div class="a" style="left:758px;top:460px;width:1px;height:26px;background:#808080"></div>
<svg class="a" style="left:767px;top:464px" width="24" height="19" viewBox="0 0 24 19"><rect width="24" height="19" fill="#86b4f8"/><path d="M0 12 Q12 10 24 11 L24 19 L0 19Z" fill="#1d4d18"/><path d="M12 3v14M5 10h14" stroke="#fff" stroke-width="4"/></svg>
<svg class="a" style="left:798px;top:464px" width="24" height="19" viewBox="0 0 24 19"><rect width="24" height="19" fill="#86b4f8"/><path d="M0 12 Q12 10 24 11 L24 19 L0 19Z" fill="#1d4d18"/><path d="M5 9h14" stroke="#fff" stroke-width="4"/></svg>
<svg class="a" style="left:831px;top:463px" width="23" height="22" viewBox="0 0 23 22"><rect x="0.5" y="1.5" width="20" height="20" fill="#e8c860" stroke="#909090"/><path d="M11 7h9v14" fill="none" stroke="#909090"/><circle cx="7" cy="12" r="3" fill="none" stroke="#909090" stroke-width="1.5"/><path d="M9 14l3 4" stroke="#909090" stroke-width="1.5"/><path d="M14 6l7-5l1 9z" fill="#6aa8f0"/><path d="M19 8l3 3" stroke="#1a6a2a" stroke-width="2"/></svg>
<!-- list -->
<div class="a" style="left:600px;top:489px;width:245px;height:284px;background:#fff;border:1px solid #a0a0a0"></div>
<div class="a" style="left:692px;top:491px;width:1px;height:23px;background:#e5e5e5"></div>
<div class="a" style="left:772px;top:491px;width:1px;height:23px;background:#e5e5e5"></div>
<div class="t" style="left:700px;top:496px">Префикс в...</div>
<div class="t" style="left:780px;top:496px">Статус</div>
<div class="t" style="left:662px;top:518px">Pa...</div>
<div class="t" style="left:700px;top:518px">Hugin\STA...</div>
<div class="t" style="left:779px;top:518px">В процессе</div>
<div class="a" style="left:601px;top:756px;width:243px;height:16px;background:#f0f0f0"></div>
<div class="a" style="left:601px;top:757px;width:84px;height:14px;background:#cdcdcd"></div>
<svg class="a" style="left:830px;top:759px" width="8" height="10" viewBox="0 0 8 10"><path d="M2 1 L6 5 L2 9" fill="none" stroke="#606060" stroke-width="1.8"/></svg>
<!-- right buttons -->
<div class="btn" style="left:851px;top:495px;width:258px;height:24px"><span style="top:4px">Добавить приложение</span></div>
<div class="btn" style="left:851px;top:521px;width:258px;height:24px"><span style="top:4px">Удалить завершенные</span></div>
<div class="btn" style="left:851px;top:547px;width:258px;height:24px"><span style="top:4px">Сменить префикс</span></div>
<div class="btn" style="left:851px;top:573px;width:258px;height:24px"><span style="top:4px">Создать новый проект</span></div>
<div class="btn" style="left:851px;top:599px;width:258px;height:24px"><span style="top:4px">Сбросить все</span></div>
<div class="btn" style="left:851px;top:625px;width:258px;height:24px"><span style="top:4px">Изменить в Hugin</span></div>
<div class="btn" style="left:851px;top:651px;width:258px;height:24px"><span style="top:4px">Поднять проект в списке</span></div>
<div class="btn" style="left:851px;top:677px;width:258px;height:24px"><span style="top:4px">Опустить проект в списке</span></div>

<div class="a" style="left:850px;top:715px;width:13px;height:13px;background:#fff;border:1px solid #333"></div>
<div class="t" style="left:866px;top:715px">Всегда перезаписывать</div>
<div class="a" style="left:850px;top:730px;width:13px;height:13px;background:#fff;border:1px solid #333"></div>
<svg class="a" style="left:850px;top:730px" width="13" height="13" viewBox="0 0 13 13"><path d="M2.5 6.5 L5.2 9.3 L10.5 3.5" fill="none" stroke="#222" stroke-width="1.2"/></svg>
<div class="t" style="left:866px;top:730px">Удалить завершенный проект</div>
<div class="a" style="left:850px;top:745px;width:13px;height:13px;background:#fff;border:1px solid #333"></div>
<div class="t" style="left:866px;top:745px">Автоматически собирать после ассистента</div>
<div class="a" style="left:845px;top:759px;width:270px;height:10px;overflow:hidden">
  <div class="t" style="left:5px;top:1px">When done</div>
  <div class="a" style="left:72px;top:0;width:137px;height:20px;background:#e5e5e5;border:1px solid #adadad"></div>
</div>
<!-- status -->
<div class="a" style="left:600px;top:773px;width:515px;height:24px;background:#f0f0f0"></div><div class="a" style="left:600px;top:774px;width:515px;height:1px;background:#d8d8d8"></div>
<div class="t" style="left:540px;top:780px;width:317px;text-align:right;overflow:hidden;letter-spacing:-0.44px">D:\Foto\Panorama-pics\STA_4058 - STF_4063.pto</div>
<div class="a" style="left:936px;top:775px;width:1px;height:20px;background:#d8d8d8"></div>
<div class="a" style="left:939px;top:778px;width:157px;height:16px;background:#e6e6e6;border:1px solid #bcbcbc"></div>
<div class="a" style="left:940px;top:779px;width:91px;height:14px;background:#06b025"></div>
<svg class="a" style="left:1103px;top:784px" width="10" height="10" viewBox="0 0 10 10"><g fill="#b0b0b0"><rect x="8" y="2" width="2" height="2"/><rect x="5" y="5" width="2" height="2"/><rect x="8" y="5" width="2" height="2"/><rect x="2" y="8" width="2" height="2"/><rect x="5" y="8" width="2" height="2"/><rect x="8" y="8" width="2" height="2"/></g></svg>

<!-- ============ dialog 1: stitching log ============ -->
<div class="a" style="left:35px;top:240px;width:626px;height:593px;background:#f0f0f0;border:1px solid #e3c38f;box-shadow:6px 4px 22px rgba(0,0,0,.35)"></div>
<div class="a" style="left:36px;top:241px;width:624px;height:30px;background:#fff"></div>
<div class="t" style="left:44px;top:249px;letter-spacing:-0.58px">STA_4058 - STF_4063 — Сборка</div>
<div class="a" style="left:48px;top:283px;width:600px;height:491px;background:#fff;border:1px solid #1e1e1e"></div>
<div class="a" style="left:630px;top:285px;width:16px;height:487px;background:#f0f0f0"></div>
<div class="a" style="left:630px;top:480px;width:15px;height:275px;background:#cdcdcd"></div>
<svg class="a" style="left:633px;top:290px" width="9" height="8" viewBox="0 0 9 8"><path d="M1 6.5 L4.5 2.5 L8 6.5" fill="none" stroke="#555" stroke-width="1.8"/></svg>
<svg class="a" style="left:633px;top:760px" width="9" height="8" viewBox="0 0 9 8"><path d="M1 1.5 L4.5 5.5 L8 1.5" fill="none" stroke="#555" stroke-width="1.8"/></svg>
<div class="mono" style="left:52px;top:301px">First input image
Number: 0
Имя файла: E:\Foto\Panorama-sources\Bakota\STA_4058.JPG
Size: 3648x2736
Проекция: Нормальный (прямолинейный)
Response type: Другой (EMoR)
HFOV: 53
Exposure value: 13.3


Remapping LDR images...
Multiple images output
loading STA_4058.JPG
remapping STA_4058.JPG
saving STA_4058 - STF_40630000.tif
loading STB_4059.JPG
remapping STB_4059.JPG
saving STA_4058 - STF_40630001.tif
loading STC_4060.JPG
remapping STC_4060.JPG
saving STA_4058 - STF_40630002.tif
loading STD_4061.JPG
remapping STD_4061.JPG
saving STA_4058 - STF_40630003.tif
loading STE_4062.JPG
remapping STE_4062.JPG
saving STA_4058 - STF_40630004.tif
loading STF_4063.JPG
remapping STF_4063.JPG
saving STA_4058 - STF_40630005.tif

Blending images...</div>
<div class="btn" style="left:563px;top:797px;width:86px;height:24px"><span style="top:4px">Отмена</span></div>
</body></html>
